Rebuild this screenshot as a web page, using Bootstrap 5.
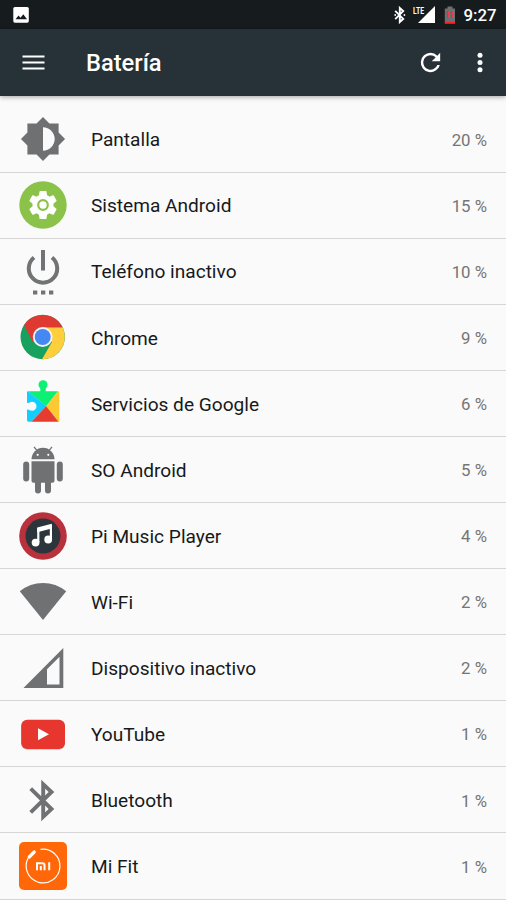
<!DOCTYPE html>
<html lang="es">
<head>
<meta charset="utf-8">
<meta name="viewport" content="width=device-width, initial-scale=1">
<title>Batería</title>
<link href="https://cdn.jsdelivr.net/npm/bootstrap@5.3.0/dist/css/bootstrap.min.css" rel="stylesheet">
<style>
  html, body { height: 900px; overflow: hidden; }
  body { font-family: Roboto, "Noto Sans", sans-serif; background: #fafafa; color: #17191b; }
  svg { display: block; flex: none; }
  .status-bar { height: 29px; background: #161b1e; color: #fff; padding: 0 9.500px 0 13px; }
  .clock { font-size: 16.800px; line-height: 29px; font-weight: 500; margin-left: 7px; padding-top: 2px; }
  .signal { margin-left: 7px; }
  .battery { margin-left: 7.500px; }
  .app-bar { height: 67px; background: #273238; color: #fff; padding: 0 12.500px 0 22px; box-shadow: 0 1px 5px rgba(0,0,0,.35); position: relative; }
  .app-title { font-size: 23.700px; line-height: 66px; font-weight: 500; margin-left: 40px; padding-top: 1px; }
  .overflow-dots { margin-left: 21px; }
  .usage-list { padding-top: 10.600px; }
  .usage-row { height: 66.080px; padding: 0 19px; border-bottom: 1px solid #d6d6d6; }
  .usage-name { font-size: 19.100px; line-height: 24px; margin-left: 24px; padding-top: 2.400px; }
  .usage-value { font-size: 16.800px; line-height: 24px; color: #757575; padding-top: 1.200px; }
</style>
<script src="https://cdn.jsdelivr.net/npm/bootstrap@5.3.0/dist/js/bootstrap.bundle.min.js"></script>
</head>
<body>
<header>
  <div class="status-bar d-flex align-items-center">
    <svg width="16" height="16" viewBox="0 0 16 16"><rect x=".3" width="15.5" height="15.7" rx="1.6" fill="#fff"/><path d="M2.5 12.3l3-3.8 2 2.3 2.8-3.6 3.7 5.1z" fill="#161b1e"/></svg>
    <svg class="ms-auto" width="12" height="18" viewBox="0 0 12 18"><path d="M1.200 4.900l8 8L5.800 16V2l3.400 3.100-8 8" fill="none" stroke="#fff" stroke-width="1.900"/><circle cx="1.200" cy="9" r=".9" fill="#fff"/><circle cx="10.400" cy="9" r=".9" fill="#fff"/></svg>
    <svg class="signal" width="24" height="19" viewBox="0 0 24 19"><path d="M22 1v17H5z" fill="#fff"/><path d="M0 0h12.500v10H0z" fill="#161b1e"/><text x="0" y="8.600" font-size="9" font-weight="700" textLength="11" lengthAdjust="spacingAndGlyphs" fill="#fff">LTE</text></svg>
    <svg class="battery" width="12" height="18" viewBox="0 0 12 18"><path d="M3.500.5h5v2H11V17.500H.8v-15h2.700z" fill="#6b7073"/><path d="M.8 15.800H11v1.700H.8z" fill="#f22"/><text x="6" y="12.400" text-anchor="middle" font-size="9" font-weight="700" textLength="8" lengthAdjust="spacingAndGlyphs" fill="#ff2a2a">11</text></svg>
    <span class="clock">9:27</span>
  </div>
  <div class="app-bar d-flex align-items-center">
    <svg width="24" height="20" viewBox="0 0 24 20"><path d="M.5 3.500h22M.5 9.500h22M.5 15.500h22" stroke="#fff" stroke-width="2.200"/></svg>
    <h1 class="app-title mb-0">Batería</h1>
    <svg class="ms-auto" width="29" height="29" viewBox="0 0 24 24"><path fill="#fff" d="M17.650 6.350A7.960 7.960 0 0 0 12 4a8 8 0 1 0 7.730 10h-2.080A6 6 0 1 1 12 6c1.660 0 3.140.69 4.220 1.780L13 11h7V4l-2.350 2.350z"/></svg>
    <svg class="overflow-dots" width="28" height="28" viewBox="0 0 28 28" fill="#fff"><circle cx="14" cy="6.300" r="2.500"/><circle cx="14" cy="13.500" r="2.500"/><circle cx="14" cy="20.700" r="2.500"/></svg>
  </div>
</header>
<main class="usage-list">
  <div class="usage-row d-flex align-items-center">
    <svg width="48" height="48" viewBox="0 0 48 48"><path transform="translate(.6 .6) scale(1.950)" fill="#6e7072" fill-rule="evenodd" d="M20 15.310L23.310 12 20 8.690V4h-4.690L12 .69 8.690 4H4v4.690L.69 12 4 15.310V20h4.690L12 23.310 15.310 20H20v-4.690zM12 18V6c3.310 0 6 2.690 6 6s-2.690 6-6 6z"/></svg>
    <span class="usage-name">Pantalla</span><span class="usage-value ms-auto">20 %</span>
  </div>
  <div class="usage-row d-flex align-items-center">
    <svg width="48" height="48" viewBox="0 0 48 48"><circle cx="24" cy="24" r="23.700" fill="#8bc34a"/><path transform="translate(7.200 7.200) scale(1.400)" fill="#fff" d="M19.430 12.980c.04-.32.07-.64.07-.98s-.03-.66-.07-.98l2.110-1.650c.19-.15.24-.42.12-.64l-2-3.460c-.12-.22-.39-.3-.61-.22l-2.490 1c-.52-.4-1.080-.73-1.690-.98l-.38-2.650A.49.49 0 0 0 14 2h-4c-.25 0-.46.18-.49.420l-.38 2.650c-.61.25-1.170.59-1.690.98l-2.490-1c-.23-.09-.49 0-.61.220l-2 3.460c-.13.22-.07.49.12.640l2.110 1.650c-.04.32-.07.65-.07.980s.03.66.07.980l-2.110 1.650c-.19.15-.24.42-.12.640l2 3.460c.12.22.39.3.61.220l2.490-1c.52.4 1.080.73 1.690.98l.38 2.650c.03.24.24.42.49.420h4c.25 0 .46-.18.49-.420l.38-2.650c.61-.25 1.170-.59 1.690-.98l2.490 1c.23.09.49 0 .61-.220l2-3.460c.12-.22.07-.49-.12-.640z"/><circle cx="24" cy="24" r="4.800" fill="#fff" stroke="#8bc34a" stroke-width="2.200"/></svg>
    <span class="usage-name">Sistema Android</span><span class="usage-value ms-auto">15 %</span>
  </div>
  <div class="usage-row d-flex align-items-center">
    <svg width="48" height="60" viewBox="0 -7 48 60"><path d="M24 2v20.500M15 9.500a14.200 14.200 0 1 0 18 0" fill="none" stroke="#717375" stroke-width="4"/><path d="M14 42.500h4.300v4H14zM22 42.500h4.300v4H22zM30 42.500h4.300v4H30z" fill="#717375"/></svg>
    <span class="usage-name">Teléfono inactivo</span><span class="usage-value ms-auto">10 %</span>
  </div>
  <div class="usage-row d-flex align-items-center">
    <svg width="48" height="48" viewBox="0 0 48 48"><circle cx="23.700" cy="24" r="22.200" fill="#17a05e"/><path d="M5 12.200A22.200 22.200 0 0 1 43.600 14.500H23.700L14.200 29.500z" fill="#df3a31"/><path d="M43.600 14.500A22.200 22.200 0 0 1 23 46.200L33 29 23.700 14.500z" fill="#ffce3d"/><circle cx="23.700" cy="24" r="9.900" fill="#f4f4f4"/><circle cx="23.700" cy="24" r="8" fill="#4688f1"/></svg>
    <span class="usage-name">Chrome</span><span class="usage-value ms-auto">9 %</span>
  </div>
  <div class="usage-row d-flex align-items-center">
    <svg width="48" height="48" viewBox="0 0 48 48"><g transform="translate(0 3.700)"><path d="M9 8.500h12.300V5h5.400v3.500H39L27.200 23.500z" fill="#0cf074"/><circle cx="24" cy="2" r="4.500" fill="#0cf074"/><path d="M9 8.500q-1 0-1 1V20c2 1 2.500-1 5-1a4.500 4.500 0 0 1 0 9c-2.500 0-3-2-5-1v10.500q0 1 1.500 1.500h3L27.500 23.500z" fill="#12cdfd"/><path d="M39 8.500q1.300 0 1.300 1.300v28.400q0 .8-.8.800L27 23.500z" fill="#fdc933"/><path d="M12.500 39h27L27.200 23.500z" fill="#e63b2f"/></g></svg>
    <span class="usage-name">Servicios de Google</span><span class="usage-value ms-auto">6 %</span>
  </div>
  <div class="usage-row d-flex align-items-center">
    <svg width="48" height="48" viewBox="0 0 48 48" fill="#6f7173"><path d="M12.500 13.300a11.500 11.500 0 0 1 23 0z"/><path d="M15 .8l4 5M33 .8l-4 5" stroke="#6f7173" stroke-width="1.300"/><circle cx="18.700" cy="8.800" r="1.100" fill="#fafafa"/><circle cx="29.300" cy="8.800" r="1.100" fill="#fafafa"/><path d="M12.500 15.300h23v19.500a2 2 0 0 1-2 2H32V44.500a3 3 0 0 1-6 0v-7.700h-4v7.700a3 3 0 0 1-6 0v-7.700h-1.500a2 2 0 0 1-2-2z"/><rect x="4.200" y="15.500" width="6" height="20" rx="3"/><rect x="37.800" y="15.500" width="6" height="20" rx="3"/></svg>
    <span class="usage-name">SO Android</span><span class="usage-value ms-auto">5 %</span>
  </div>
  <div class="usage-row d-flex align-items-center">
    <svg width="48" height="48" viewBox="0 0 48 48"><circle cx="24" cy="24" r="23.800" fill="#b9313c"/><circle cx="24" cy="24" r="17.500" fill="#2c353c"/><path d="M18.200 15.500l14.600-3.700v4.700l-14.600 3.700z" fill="#fff"/><path d="M19.300 16v14M31.900 13v14" stroke="#fff" stroke-width="2.200"/><circle cx="16.600" cy="30.600" r="3.900" fill="#fff"/><circle cx="29.200" cy="27.500" r="3.900" fill="#fff"/></svg>
    <span class="usage-name">Pi Music Player</span><span class="usage-value ms-auto">4 %</span>
  </div>
  <div class="usage-row d-flex align-items-center">
    <svg width="48" height="48" viewBox="0 0 48 48"><path d="M.8 13.300Q11 5 24 5t23.200 8.300L24 42z" fill="#6f7173"/></svg>
    <span class="usage-name">Wi-Fi</span><span class="usage-value ms-auto">2 %</span>
  </div>
  <div class="usage-row d-flex align-items-center">
    <svg width="48" height="48" viewBox="0 0 48 48"><path fill-rule="evenodd" d="M44.300 4v40H4.500zM40.500 12.800L28 25.300v15.200h12.500z" fill="#6f7173"/></svg>
    <span class="usage-name">Dispositivo inactivo</span><span class="usage-value ms-auto">2 %</span>
  </div>
  <div class="usage-row d-flex align-items-center">
    <svg width="48" height="48" viewBox="0 0 48 48"><rect x="2.200" y="10.500" width="43.800" height="29.200" rx="6" fill="#c9c9c9"/><rect x="2.200" y="9.800" width="43.800" height="29.200" rx="6" fill="#e7362e"/><path d="M19 18.300l11 6-11 6z" fill="#fff"/></svg>
    <span class="usage-name">YouTube</span><span class="usage-value ms-auto">1 %</span>
  </div>
  <div class="usage-row d-flex align-items-center">
    <svg width="48" height="48" viewBox="0 0 48 48"><path d="M11.700 12.700L32.500 33 24.200 40.800V8.200L32.500 16 11.700 36.300" fill="none" stroke="#6f7173" stroke-width="3.900"/></svg>
    <span class="usage-name">Bluetooth</span><span class="usage-value ms-auto">1 %</span>
  </div>
  <div class="usage-row d-flex align-items-center">
    <svg width="48" height="48" viewBox="0 0 48 48"><rect width="48" height="48" rx="5" fill="#ff6709"/><path d="M21.500 7.300A16.900 16.900 0 1 1 9 16.300" fill="none" stroke="#fff" stroke-width="1.200"/><path d="M10.200 15l5-5" stroke="#fff" stroke-width="3.200" stroke-linecap="round"/><path d="M18 28.300v-7h5.500q2 0 2 2v5M21.800 24v4.300M30.200 20.300v8" fill="none" stroke="#fff" stroke-width="2"/></svg>
    <span class="usage-name">Mi Fit</span><span class="usage-value ms-auto">1 %</span>
  </div>
</main>
</body>
</html>
